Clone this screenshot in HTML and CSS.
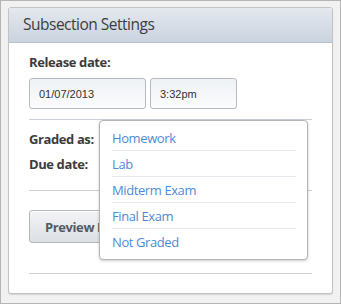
FILE: index.html
```html
<!DOCTYPE html>
<html lang="en">
<head>
    <meta charset="UTF-8">
    <meta name="viewport" content="width=device-width, initial-scale=1.0">
    <title>Subsection Settings</title>
    <link rel="stylesheet" href="styles.css">
</head>
<body>

    <div class="frame">
        <div class="panel">
            <h2 class="panel-title">Subsection Settings</h2>

            <div class="panel-body">
                <!-- Ngày phát hành -->
                <div class="field-label">Release date:</div>
                <div class="date-row">
                    <input type="text" class="date-input" value="01/07/2013">
                    <input type="text" class="time-input" value="3:32pm">
                </div>

                <hr class="divider">

                <div class="info-row">Graded as:</div>
                <div class="info-row">Due date:</div>

                <hr class="divider divider-2">

                <button class="preview-button">Preview Drafts</button>

                <hr class="divider divider-3">

                <!-- Menu chọn kiểu chấm điểm -->
                <ul class="grade-menu">
                    <li><a href="#">Homework</a></li>
                    <li><a href="#">Lab</a></li>
                    <li><a href="#">Midterm Exam</a></li>
                    <li><a href="#">Final Exam</a></li>
                    <li><a href="#">Not Graded</a></li>
                </ul>
            </div>
        </div>
    </div>

</body>
</html>
```

FILE: styles.css
```css
html, body {
    margin: 0;
    padding: 0;
}

body {
    background-color: #f1f1f1;
    font-family: "Open Sans", "DejaVu Sans", sans-serif;
    color: #3c3c3c;
}

.frame {
    height: 304px;
    box-sizing: border-box;
    border: 1px solid #b5b5b5;
    padding: 6px 7px 0 7px;
}

/* Khung cài đặt */
.panel {
    background-color: #fff;
    border: 1px solid #c3c3c3;
    border-radius: 3px;
    box-shadow: 0 1px 1px rgba(0, 0, 0, 0.12);
    height: 287px;
    box-sizing: border-box;
}

.panel-title {
    margin: 0;
    height: 34px;
    line-height: 33px;
    padding-left: 14px;
    font-size: 15.5px;
    letter-spacing: -0.5px;
    font-weight: 400;
    color: #3d3d3d;
    background: linear-gradient(#e4e8ef, #cad3df);
    border-bottom: 1px solid #b9c1cc;
    border-radius: 2px 2px 0 0;
}

.panel-body {
    position: relative;
    padding: 9px 20px 0 20px;
}

.field-label {
    font-size: 13px;
    letter-spacing: -0.4px;
    font-weight: 700;
    line-height: 20px;
    margin-bottom: 6px;
}

.date-row {
    display: flex;
    gap: 4px;
}

.date-row input {
    height: 31px;
    box-sizing: border-box;
    border: 1px solid #b6bac1;
    border-radius: 3px;
    background: linear-gradient(#eef1f5, #fbfcfd);
    font-family: "Liberation Sans", Arial, sans-serif;
    font-size: 11px;
    color: #333;
    padding: 0 9px;
    margin: 0;
}

.date-input {
    width: 117px;
}

.time-input {
    width: 87px;
}

.divider {
    border: none;
    border-top: 1px solid #ccd1d9;
    margin: 10px 0 7px 0;
    height: 0;
}

.divider-2 {
    margin: 13px 0 19px 0;
}

.divider-3 {
    margin: 30px 0 0 0;
}

.info-row {
    font-size: 13px;
    letter-spacing: -0.4px;
    font-weight: 700;
    line-height: 25px;
}

.preview-button {
    height: 33px;
    width: 150px;
    box-sizing: border-box;
    text-align: left;
    padding: 0 15px;
    font-family: "Open Sans", "DejaVu Sans", sans-serif;
    font-size: 13px;
    letter-spacing: -0.4px;
    font-weight: 700;
    color: #555a61;
    background: linear-gradient(#f3f4f6, #dcdfe4);
    border: 1px solid #b3b7be;
    border-radius: 3px;
    box-shadow: inset 0 1px 0 #fff;
}

/* Menu thả xuống */
.grade-menu {
    position: absolute;
    left: 90px;
    top: 77px;
    width: 209px;
    box-sizing: border-box;
    margin: 0;
    padding: 4px 11px 5px 12px;
    list-style: none;
    background-color: #fff;
    border: 1px solid #b4b4b4;
    border-radius: 4px;
    box-shadow: 0 1px 3px rgba(0, 0, 0, 0.2);
}

.grade-menu li {
    height: 25px;
    line-height: 25px;
    border-bottom: 1px solid #e6e9ee;
}

.grade-menu li:last-child {
    border-bottom: none;
}

.grade-menu a {
    font-size: 13px;
    letter-spacing: -0.4px;
    color: #4f8ad6;
    text-decoration: none;
}
```
